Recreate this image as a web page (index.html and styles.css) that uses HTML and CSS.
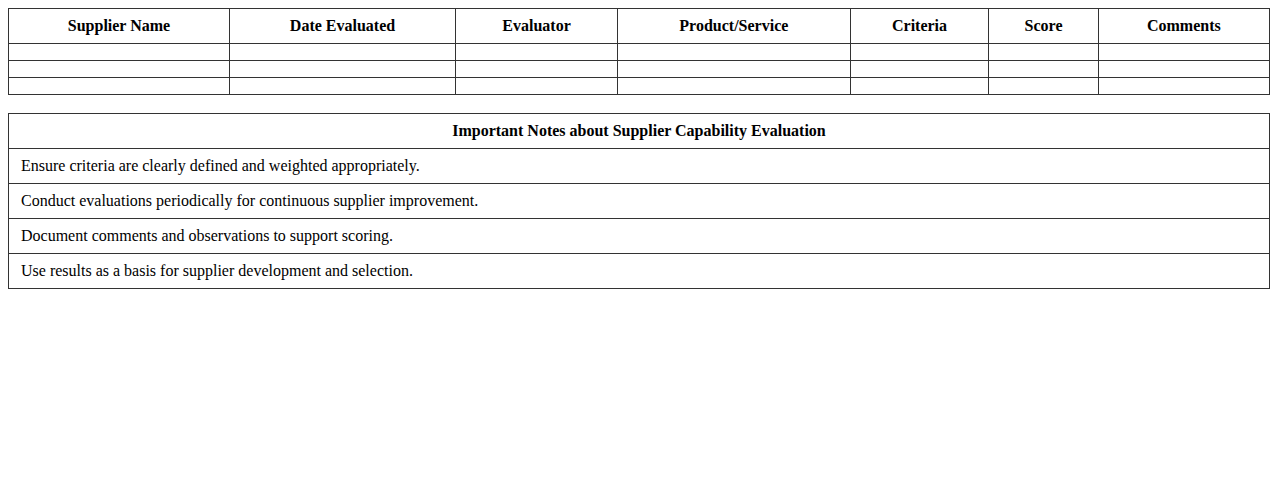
FILE: index.html
```html
<!DOCTYPE html>
<html>
<head>
<meta charset="utf-8">
<link rel="stylesheet" href="styles.css">
</head>
<body>
<table class="grid">
  <thead>
    <tr>
      <th>Supplier Name</th>
      <th>Date Evaluated</th>
      <th>Evaluator</th>
      <th>Product/Service</th>
      <th>Criteria</th>
      <th>Score</th>
      <th>Comments</th>
    </tr>
  </thead>
  <tbody>
    <tr><td></td><td></td><td></td><td></td><td></td><td></td><td></td></tr>
    <tr><td></td><td></td><td></td><td></td><td></td><td></td><td></td></tr>
    <tr><td></td><td></td><td></td><td></td><td></td><td></td><td></td></tr>
  </tbody>
</table>
<table class="notes">
  <thead>
    <tr><th>Important Notes about Supplier Capability Evaluation</th></tr>
  </thead>
  <tbody>
    <tr><td>Ensure criteria are clearly defined and weighted appropriately.</td></tr>
    <tr><td>Conduct evaluations periodically for continuous supplier improvement.</td></tr>
    <tr><td>Document comments and observations to support scoring.</td></tr>
    <tr><td>Use results as a basis for supplier development and selection.</td></tr>
  </tbody>
</table>
</body>
</html>
```
FILE: styles.css
```css
body {
  margin: 8px;
  font-family: "Liberation Serif", "Times New Roman", serif;
  font-size: 16px;
  color: #000;
  background: #fff;
}
table {
  width: 100%;
  border-collapse: collapse;
}
th, td {
  border: 1px solid #333;
  padding: 8px 12px;
}
th {
  font-weight: bold;
  text-align: center;
}
td {
  text-align: left;
}
.grid {
  margin-bottom: 18px;
}
```
